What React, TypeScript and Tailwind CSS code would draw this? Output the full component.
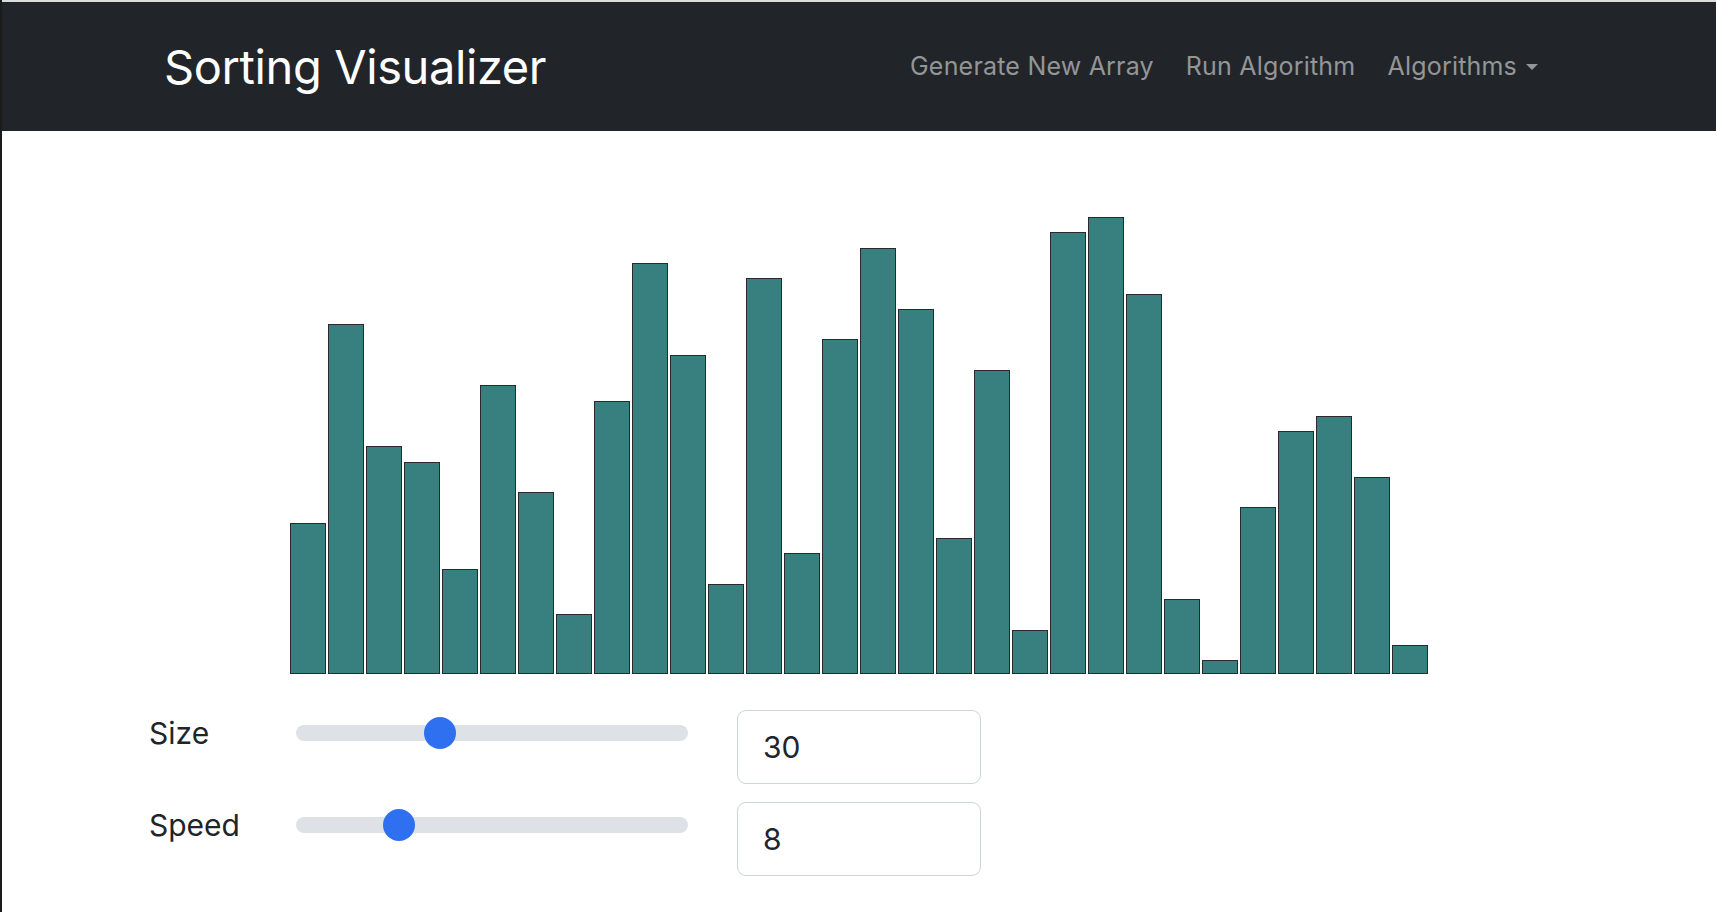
import React from "react";

const values = [10, 23, 15, 14, 7, 19, 12, 4, 18, 27, 21, 6, 26, 8, 22, 28, 24, 9, 20, 3, 29, 30, 25, 5, 1, 11, 16, 17, 13, 2];

function Slider({ label, thumbLeft, value }: { label: string; thumbLeft: number; value: string }) {
  return (
    <div className="flex items-start h-[74px]">
      <div className="w-[147px] h-[46px] flex items-center text-[30px] text-[#212529]">{label}</div>
      <div className="relative mt-[15px] w-[392px] h-4 rounded-full bg-[#dee2e6]">
        <div
          className="absolute top-[-8px] w-8 h-8 rounded-full bg-[#2f70f0]"
          style={{ left: thumbLeft }}
        />
      </div>
      <div className="ml-[49px] w-[244px] h-[74px] border border-[#ced4da] rounded-[9px] flex items-center pl-[25px] text-[30px] text-[#212529]">
        {value}
      </div>
    </div>
  );
}

export default function App() {
  return (
    <div className="flex min-h-[912px] bg-white" style={{ fontFamily: "Inter, 'Noto Sans', sans-serif" }}>
      <div className="w-[2px] bg-[#1b1b1c] shrink-0" />
      <div className="flex-1 flex flex-col">
        <div className="h-[2px] bg-[#dcdcdc]" />
        <nav className="h-[129px] bg-[#212529] flex items-center justify-between pl-[162px] pr-[178px]">
          <div className="text-white text-[47px] leading-none tracking-[-0.4px]">Sorting Visualizer</div>
          <div className="flex items-center gap-[32px] text-[25px] tracking-[0.2px] text-[#949597]">
            <span>Generate New Array</span>
            <span>Run Algorithm</span>
            <span className="flex items-center gap-[9px]">
              Algorithms
              <span className="w-0 h-0 border-l-[6px] border-r-[6px] border-t-[6px] border-l-transparent border-r-transparent border-t-[#949597] mt-[1px]" />
            </span>
          </div>
        </nav>
        <div className="mt-[86px] h-[457px] flex items-end justify-center gap-[2px]">
          {values.map((v, i) => (
            <div
              key={i}
              className="w-[36px] bg-[#387f80] border border-[#2a2a2a]"
              style={{ height: `${Math.round(15.276 * v - 1.5)}px` }}
            />
          ))}
        </div>
        <div className="mt-[36px] pl-[147px] flex flex-col gap-[18px]">
          <Slider label="Size" thumbLeft={128} value="30" />
          <Slider label="Speed" thumbLeft={87} value="8" />
        </div>
      </div>
    </div>
  );
}
